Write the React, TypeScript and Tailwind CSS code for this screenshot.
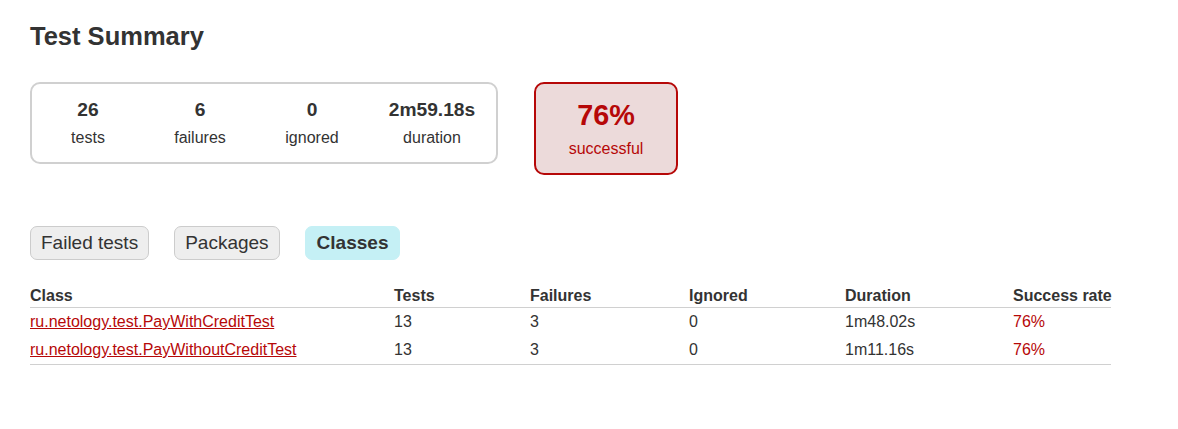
import React from "react";

const stats = [
  { value: "26", label: "tests", w: "w-[112px]" },
  { value: "6", label: "failures", w: "w-[112px]" },
  { value: "0", label: "ignored", w: "w-[112px]" },
  { value: "2m59.18s", label: "duration", w: "w-[128px]" },
];

const rows = [
  { name: "ru.netology.test.PayWithCreditTest", tests: "13", failures: "3", ignored: "0", duration: "1m48.02s", rate: "76%" },
  { name: "ru.netology.test.PayWithoutCreditTest", tests: "13", failures: "3", ignored: "0", duration: "1m11.16s", rate: "76%" },
];

const cols = "grid grid-cols-[364px_136px_159px_156px_168px_98px]";

export default function App() {
  return (
    <div className="min-h-[429px] bg-white text-[#333] font-['Liberation_Sans',Arial,sans-serif] text-[16px] pl-[30px] pt-[21px]">
      <h1 className="text-[25.5px] leading-[30px] font-bold">Test Summary</h1>

      <div className="flex items-start mt-[31px]">
        <div className="flex border-2 border-[#d0d0d0] rounded-[10px]">
          {stats.map((s) => (
            <div key={s.label} className={`${s.w} py-[15px] text-center`}>
              <p className="text-[19.2px] leading-[22px] font-bold mb-[8px]">{s.value}</p>
              <p className="leading-[18px]">{s.label}</p>
            </div>
          ))}
        </div>
        <div className="ml-[36px] w-[144px] py-[15px] text-center border-2 border-[#b60808] rounded-[10px] bg-[#ecdada] text-[#b60808]">
          <p className="text-[28.8px] leading-[33px] font-bold mb-[8px]">76%</p>
          <p className="leading-[18px]">successful</p>
        </div>
      </div>

      <div className="flex gap-[25px] mt-[51px]">
        <span className="px-[10px] py-[5px] text-[19px] leading-[22px] bg-[#eee] border border-[#ccc] rounded-[7px]">Failed tests</span>
        <span className="px-[10px] py-[5px] text-[19px] leading-[22px] bg-[#eee] border border-[#ccc] rounded-[7px]">Packages</span>
        <span className="px-[11px] py-[5px] text-[19px] leading-[22px] font-bold bg-[#c5f0f5] border border-[#c5f0f5] rounded-[7px]">Classes</span>
      </div>

      <div className="mt-[27px] w-[1081px]">
        <div className={`${cols} font-bold leading-[18px] pb-[2px] border-b border-[#d0d0d0]`}>
          <span>Class</span>
          <span>Tests</span>
          <span>Failures</span>
          <span>Ignored</span>
          <span>Duration</span>
          <span className="whitespace-nowrap">Success rate</span>
        </div>
        <div className="border-b border-[#d0d0d0]">
          {rows.map((r) => (
            <div key={r.name} className={`${cols} leading-[18px] pt-[5px] pb-[5px]`}>
              <a href="#" className="text-[#b60808] underline whitespace-nowrap">{r.name}</a>
              <span>{r.tests}</span>
              <span>{r.failures}</span>
              <span>{r.ignored}</span>
              <span>{r.duration}</span>
              <span className="text-[#b60808]">{r.rate}</span>
            </div>
          ))}
        </div>
      </div>
    </div>
  );
}
